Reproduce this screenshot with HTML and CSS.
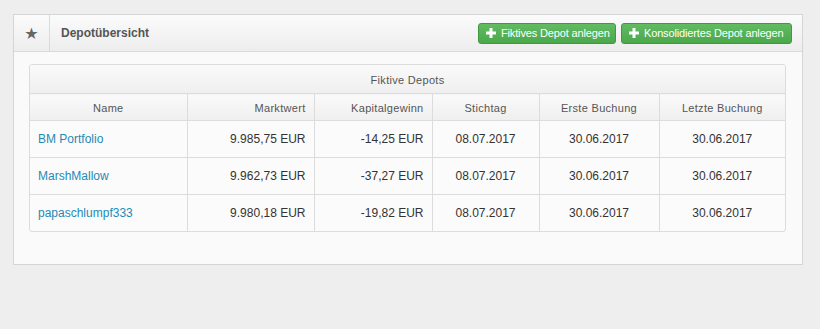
FILE: index.html
```html
<!DOCTYPE html>
<html lang="de">
<head>
    <meta charset="UTF-8">
    <title>Depotübersicht</title>
    <link rel="stylesheet" href="styles.css">
</head>
<body>
    <div class="widget">
        <div class="widget-header">
            <div class="widget-icon">★</div>
            <h3 class="widget-title">Depotübersicht</h3>
            <div class="widget-actions">
                <a class="btn btn-fiktiv" href="#">
                    <svg class="plus" viewBox="0 0 10 10"><path d="M3.5 0h3v3.5H10v3H6.5V10h-3V6.5H0v-3h3.5z"/></svg>
                    Fiktives Depot anlegen
                </a>
                <a class="btn btn-konsol" href="#">
                    <svg class="plus" viewBox="0 0 10 10"><path d="M3.5 0h3v3.5H10v3H6.5V10h-3V6.5H0v-3h3.5z"/></svg>
                    Konsolidiertes Depot anlegen
                </a>
            </div>
        </div>
        <div class="widget-content">
            <div class="table-box">
                <table class="depot-table">
                    <colgroup>
                        <col class="col-name">
                        <col class="col-value">
                        <col class="col-gain">
                        <col class="col-date">
                        <col class="col-first">
                        <col class="col-last">
                    </colgroup>
                    <thead>
                        <tr class="caption-row">
                            <th colspan="6">Fiktive Depots</th>
                        </tr>
                        <tr class="head-row">
                            <th>Name</th>
                            <th class="right">Marktwert</th>
                            <th class="right">Kapitalgewinn</th>
                            <th>Stichtag</th>
                            <th>Erste Buchung</th>
                            <th>Letzte Buchung</th>
                        </tr>
                    </thead>
                    <tbody>
                        <tr>
                            <td class="left"><a href="#">BM Portfolio</a></td>
                            <td class="right">9.985,75 EUR</td>
                            <td class="right">-14,25 EUR</td>
                            <td>08.07.2017</td>
                            <td>30.06.2017</td>
                            <td>30.06.2017</td>
                        </tr>
                        <tr>
                            <td class="left"><a href="#">MarshMallow</a></td>
                            <td class="right">9.962,73 EUR</td>
                            <td class="right">-37,27 EUR</td>
                            <td>08.07.2017</td>
                            <td>30.06.2017</td>
                            <td>30.06.2017</td>
                        </tr>
                        <tr>
                            <td class="left"><a href="#">papaschlumpf333</a></td>
                            <td class="right">9.980,18 EUR</td>
                            <td class="right">-19,82 EUR</td>
                            <td>08.07.2017</td>
                            <td>30.06.2017</td>
                            <td>30.06.2017</td>
                        </tr>
                    </tbody>
                </table>
            </div>
        </div>
    </div>
</body>
</html>
```

FILE: styles.css
```css
body {
    margin: 0;
    padding: 14px 13px;
    background: #eeeeee;
    font-family: "Liberation Sans", Arial, sans-serif;
    font-size: 12px;
    color: #333;
}
.widget {
    width: 788px;
    border: 1px solid #d5d5d5;
    background: #fafafa;
}
.widget-header {
    display: flex;
    align-items: center;
    height: 36px;
    border-bottom: 1px solid #dadada;
    background: linear-gradient(#fbfbfb, #ededed);
}
.widget-icon {
    width: 35px;
    height: 36px;
    line-height: 37px;
    text-align: center;
    border-right: 1px solid #dadada;
    color: #666;
    font-size: 16px;
    font-family: "DejaVu Sans", sans-serif;
}
.widget-title {
    margin: 0 0 0 11px;
    font-size: 12px;
    font-weight: bold;
    color: #555;
    flex: 1;
}
.widget-actions {
    display: flex;
    gap: 5px;
    padding-right: 10px;
}
.btn {
    display: flex;
    align-items: center;
    gap: 5px;
    box-sizing: border-box;
    height: 21px;
    padding: 0 0 0 7px;
    border: 1px solid #3f9a3f;
    border-radius: 3px;
    background: linear-gradient(#62bb62, #4aa84a);
    color: #fff;
    text-decoration: none;
    font-size: 11px;
    letter-spacing: -0.15px;
    white-space: nowrap;
    overflow: hidden;
}
.btn-fiktiv {
    width: 138px;
}
.btn-konsol {
    width: 171px;
}
.plus {
    width: 10px;
    height: 10px;
    fill: #fff;
    flex: none;
}
.widget-content {
    padding: 12px 16px 32px 15px;
}
.table-box {
    border: 1px solid #dcdcdc;
    border-radius: 3px;
    overflow: hidden;
    background: #fbfbfb;
}
.depot-table {
    width: 100%;
    border-collapse: collapse;
    table-layout: fixed;
}
.col-name { width: 157px; }
.col-value { width: 127px; }
.col-gain { width: 118px; }
.col-date { width: 107px; }
.col-first { width: 120px; }
.col-last { width: 126px; }
.depot-table th {
    font-weight: normal;
    font-size: 11px;
    line-height: 14px;
    color: #555;
    letter-spacing: 0.3px;
    background: linear-gradient(#fafafa, #efefef);
    border-bottom: 1px solid #dcdcdc;
}
.caption-row th {
    padding: 8px 0 6px;
}
.head-row th {
    padding: 7px 8px 5px;
    border-left: 1px solid #dcdcdc;
}
.head-row th:first-child,
.depot-table td:first-child {
    border-left: none;
}
.depot-table td {
    padding: 11px 8px 11px;
    line-height: 14px;
    border-left: 1px solid #dcdcdc;
    border-top: 1px solid #dcdcdc;
    text-align: center;
    color: #333;
}
.depot-table tbody tr:first-child td {
    border-top: none;
}
.depot-table .right {
    text-align: right;
}
.depot-table .left {
    text-align: left;
}
.depot-table a {
    color: #1f8ab6;
    text-decoration: none;
}
```
